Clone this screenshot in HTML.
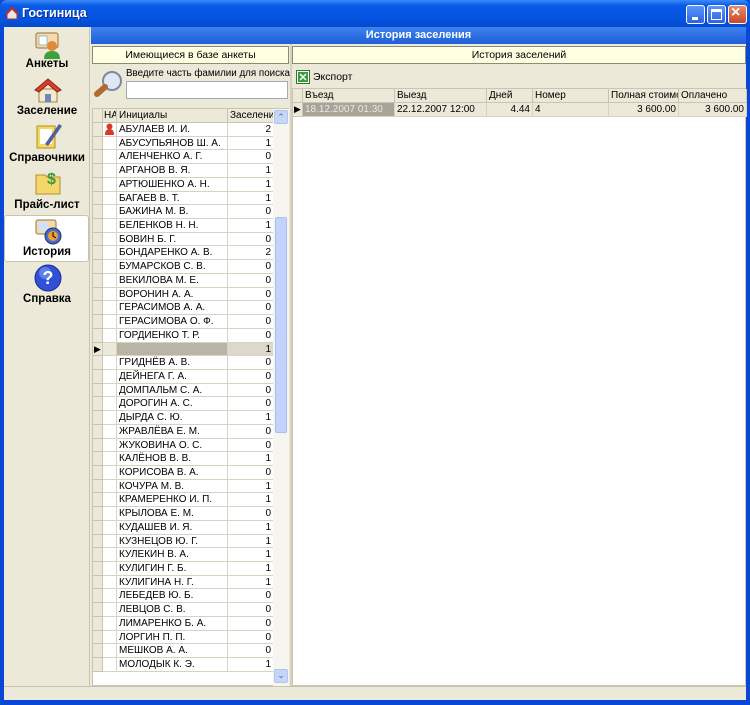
<!DOCTYPE html>
<html><head><meta charset="utf-8"><style>
*{margin:0;padding:0;box-sizing:border-box}
body{width:750px;height:705px;overflow:hidden;background:#0a47d6;font-family:"Liberation Sans","DejaVu Sans",sans-serif;font-size:11px;color:#000;position:relative}
.abs{position:absolute}
#title{left:0;top:0;width:750px;height:27px;background:linear-gradient(#3d8bf7,#0a5ae8 20%,#0554e0 70%,#0449cf);border-radius:7px 7px 0 0}
#title span{position:absolute;left:22px;top:6px;color:#fff;font-weight:bold;font-size:12.5px;text-shadow:1px 1px #0a2a8a}
.wb{position:absolute;top:5px;width:19px;height:19px;border:1px solid #fff;border-radius:3px;background:linear-gradient(#5d95f7,#2a64e4)}
#win{left:4px;top:27px;width:742px;height:673px;background:#ece9d8}
#nav{left:4px;top:27px;width:86px;height:659px;background:#ece9d8;border-right:1px solid #c8c4b0}
.ni{position:absolute;left:0;width:86px;text-align:center;font-weight:bold;font-size:11.5px}
.ico{position:absolute;left:29px;width:30px;height:30px}
#bluehdr{left:91px;top:27px;width:655px;height:17px;background:linear-gradient(#3e82ee,#1f5fd8);color:#fff;font-weight:bold;text-align:center;line-height:17px;font-size:11px}
.yb{position:absolute;height:18px;background:#ffffe1;border:1px solid #8c8a7a;text-align:center;line-height:16px;font-size:10.5px}
.grid{position:absolute;background:#fff}
.row{position:absolute;left:0;display:flex;height:13.72px}
.c{border-right:1px solid #d6d3c4;border-bottom:1px solid #d6d3c4;height:100%;white-space:nowrap;overflow:hidden;line-height:14px;padding:0 2px;font-size:10px}
.hd .c{background:#ece9d8;border-right:1px solid #c8c5b5;border-bottom:1px solid #c8c5b5;font-size:10px}
.ind{background:#ece9d8;border-right:1px solid #c8c5b5!important;border-bottom:1px solid #c8c5b5!important}
.r{text-align:right}
</style></head><body>
<div id="title" class="abs">
<svg class="abs" style="left:5px;top:6px" width="14" height="14"><path d="M2 8 L7 3 L12 8 L12 13 L2 13Z" fill="#e8e8e8" stroke="#b03020"/><path d="M1 8 L7 2 L13 8" fill="none" stroke="#c03020" stroke-width="2"/></svg>
<span>Гостиница</span>
<div class="wb" style="left:686px"><div class="abs" style="left:5px;top:11px;width:6px;height:3px;background:#fff"></div></div>
<div class="wb" style="left:707px"><div class="abs" style="left:3px;top:3px;width:11px;height:11px;border:1px solid #fff;border-top-width:3px"></div></div>
<div class="wb" style="left:728px;background:linear-gradient(#e98a6c,#c9472a)"><div class="abs" style="left:2px;top:-2px;color:#fff;font-size:16px;font-weight:bold">×</div></div>
</div>
<div id="win" class="abs"></div>
<div id="nav" class="abs">
 <svg class="ico" style="top:3px" viewBox="0 0 30 30"><rect x="3" y="3" width="22" height="15" rx="2" fill="#f2dcae" stroke="#a07030"/><rect x="6" y="6" width="8" height="9" fill="#fff" stroke="#9bb"/><circle cx="19" cy="16" r="5" fill="#e08a3a"/><path d="M11 29 Q11 21 19 21 Q27 21 27 29Z" fill="#3aa23a"/></svg>
 <div class="ni" style="top:31px">Анкеты</div>
 <svg class="ico" style="top:48px" viewBox="0 0 30 30"><path d="M6 14 L6 27 L24 27 L24 14Z" fill="#f3ead0" stroke="#a08050"/><path d="M2 15 L15 4 L28 15 L24 17 L15 9 L6 17Z" fill="#d8402a" stroke="#902010"/><rect x="12" y="19" width="6" height="8" fill="#7088b8"/></svg>
 <div class="ni" style="top:78px">Заселение</div>
 <svg class="ico" style="top:93px" viewBox="0 0 30 30"><rect x="4" y="6" width="18" height="22" fill="#f6d860" stroke="#b09020"/><rect x="7" y="9" width="12" height="15" fill="#fff"/><path d="M12 24 L26 4 L29 6 L15 26Z" fill="#5060a0"/></svg>
 <div class="ni" style="top:125px">Справочники</div>
 <svg class="ico" style="top:140px" viewBox="0 0 30 30"><path d="M3 12 L3 27 L27 27 L27 10 L14 10 L12 8 L3 8Z" fill="#f4d66a" stroke="#b09030"/><text x="14" y="17" font-size="16" fill="#3a9a3a" font-weight="bold">$</text></svg>
 <div class="ni" style="top:172px">Прайс-лист</div>
 <div class="abs" style="left:0;top:188px;width:85px;height:47px;background:#fff;border:1px solid #c8c4b0;border-radius:3px"></div>
 <svg class="ico" style="top:189px" viewBox="0 0 30 30"><rect x="3" y="4" width="20" height="14" rx="2" fill="#f2dcae" stroke="#a07030"/><rect x="5" y="6" width="10" height="9" fill="#cfe0f8"/><circle cx="20" cy="20" r="8" fill="#4a6ac8" stroke="#203080"/><circle cx="20" cy="20" r="5" fill="#e8a030"/><path d="M20 16 L20 20 L23 22" stroke="#000" fill="none"/></svg>
 <div class="ni" style="top:219px">История</div>
 <svg class="ico" style="top:236px" viewBox="0 0 30 30"><circle cx="15" cy="15" r="13" fill="#3050d8" stroke="#1a2a90"/><circle cx="12" cy="10" r="6" fill="#7d9cf4" opacity=".6"/><text x="15" y="21" font-size="18" font-weight="bold" fill="#fff" text-anchor="middle" font-family="Liberation Sans">?</text></svg>
 <div class="ni" style="top:266px">Справка</div>
</div>
<div id="bluehdr" class="abs">История заселения</div>
<div class="abs" style="left:290px;top:44px;width:2px;height:642px;background:#d6d2c0"></div>
<div class="yb" style="left:92px;top:46px;width:197px">Имеющиеся в базе анкеты</div>
<div class="yb" style="left:292px;top:46px;width:454px">История заселений</div>
<svg class="abs" style="left:93px;top:70px" width="32" height="28" viewBox="0 0 32 28"><circle cx="19" cy="11" r="9" fill="#dfe8f4" stroke="#7a8aa0" stroke-width="2"/><path d="M12 17 L4 24" stroke="#b06a30" stroke-width="6" stroke-linecap="round"/></svg>
<div class="abs" style="left:126px;top:68px;font-size:9.8px">Введите часть фамилии для поиска</div>
<div class="abs" style="left:126px;top:81px;width:162px;height:18px;background:#fff;border:1px solid #a5acb5"></div>
<svg class="abs" style="left:296px;top:70px" width="14" height="14"><rect x=".5" y=".5" width="13" height="13" fill="#fff" stroke="#2a7a2a"/><rect x="2" y="2" width="10" height="10" fill="#3a9a3a"/><path d="M4 4 L10 10 M10 4 L4 10" stroke="#fff" stroke-width="1.5"/></svg>
<div class="abs" style="left:313px;top:71px;font-size:10.5px">Экспорт</div>

<div class="grid" style="left:92px;top:108px;width:197px;height:578px;border:1px solid #c8c5b5;border-right:0" id="lg"></div>
<div class="abs" style="left:273px;top:109px;width:16px;height:577px;background:#f6f5f0"></div>
<div class="abs" style="left:274px;top:110px;width:14px;height:14px;background:#c6d6f8;border:1px solid #b0c4ee;border-radius:2px;color:#4a62a8;font-size:9px;text-align:center;line-height:13px">⌃</div>
<div class="abs" style="left:275px;top:217px;width:12px;height:216px;background:#c3d3fb;border:1px solid #a9bff3;border-radius:2px"></div>
<div class="abs" style="left:274px;top:669px;width:14px;height:14px;background:#c6d6f8;border:1px solid #b0c4ee;border-radius:2px;color:#4a62a8;font-size:9px;text-align:center;line-height:10px">⌄</div>

<div class="grid" style="left:292px;top:88px;width:454px;height:598px;border:1px solid #c8c5b5">
 <div class="row hd" style="top:0"><div class="c ind" style="width:10px"></div><div class="c" style="width:92px">Въезд</div><div class="c" style="width:92px">Выезд</div><div class="c" style="width:46px">Дней</div><div class="c" style="width:76px">Номер</div><div class="c" style="width:70px">Полная стоимо</div><div class="c" style="width:68px">Оплачено</div></div>
 <div class="row" style="top:14px;background:#ece9d8"><div class="c ind" style="width:10px;font-size:9px;line-height:13px;padding:0 1px">▶</div><div class="c" style="width:92px;background:#a8a497;color:#e8e8e8">18.12.2007 01:30</div><div class="c" style="width:92px">22.12.2007 12:00</div><div class="c r" style="width:46px">4.44</div><div class="c" style="width:76px">4</div><div class="c r" style="width:70px">3 600.00</div><div class="c r" style="width:68px">3 600.00</div></div>
</div>
<div class="abs" style="left:4px;top:686px;width:742px;height:14px;background:#ece9d8;border-top:1px solid #c8c4b0"></div>

<script>
var names=["АБУЛАЕВ И. И.","АБУСУПЬЯНОВ Ш. А.","АЛЕНЧЕНКО А. Г.","АРГАНОВ В. Я.","АРТЮШЕНКО А. Н.","БАГАЕВ В. Т.","БАЖИНА М. В.","БЕЛЕНКОВ Н. Н.","БОВИН Б. Г.","БОНДАРЕНКО А. В.","БУМАРСКОВ С. В.","ВЕКИЛОВА М. Е.","ВОРОНИН А. А.","ГЕРАСИМОВ А. А.","ГЕРАСИМОВА О. Ф.","ГОРДИЕНКО Т. Р.","","ГРИДНЁВ А. В.","ДЕЙНЕГА Г. А.","ДОМПАЛЬМ С. А.","ДОРОГИН А. С.","ДЫРДА С. Ю.","ЖРАВЛЁВА Е. М.","ЖУКОВИНА О. С.","КАЛЁНОВ В. В.","КОРИСОВА В. А.","КОЧУРА М. В.","КРАМЕРЕНКО И. П.","КРЫЛОВА Е. М.","КУДАШЕВ И. Я.","КУЗНЕЦОВ Ю. Г.","КУЛЕКИН В. А.","КУЛИГИН Г. Б.","КУЛИГИНА Н. Г.","ЛЕБЕДЕВ Ю. Б.","ЛЕВЦОВ С. В.","ЛИМАРЕНКО Б. А.","ЛОРГИН П. П.","МЕШКОВ А. А.","МОЛОДЫК К. Э."];
var v="2101110102000000100001001011011111000001";
var h='<div class="row hd" style="top:0;height:14px"><div class="c ind" style="width:10px"></div><div class="c" style="width:14px;padding:0 1px">НА</div><div class="c" style="width:111px">Инициалы</div><div class="c" style="width:46px">Заселения</div></div>';
for(var i=0;i<names.length;i++){var sel=i==16;
h+='<div class="row" style="top:'+(14+i*13.72)+'px'+(sel?';background:#ece9d8':'')+'"><div class="c ind" style="width:10px;font-size:9px;line-height:13px;padding:0 1px">'+(sel?'▶':'')+'</div><div class="c" style="width:14px;padding:0 1px">'+(i==0?'<svg width="11" height="12"><circle cx="5.5" cy="3.5" r="3" fill="#d83a2a"/><path d="M1 12 Q1 6 5.5 6 Q10 6 10 12Z" fill="#d83a2a"/></svg>':'')+'</div><div class="c" style="width:111px'+(sel?';background:#b8b4a6':'')+'">'+names[i]+'</div><div class="c r" style="width:46px'+(sel?';background:#dcd9cc':'')+'">'+v[i]+'</div></div>';}
document.getElementById('lg').innerHTML=h;
</script>
</body></html>
